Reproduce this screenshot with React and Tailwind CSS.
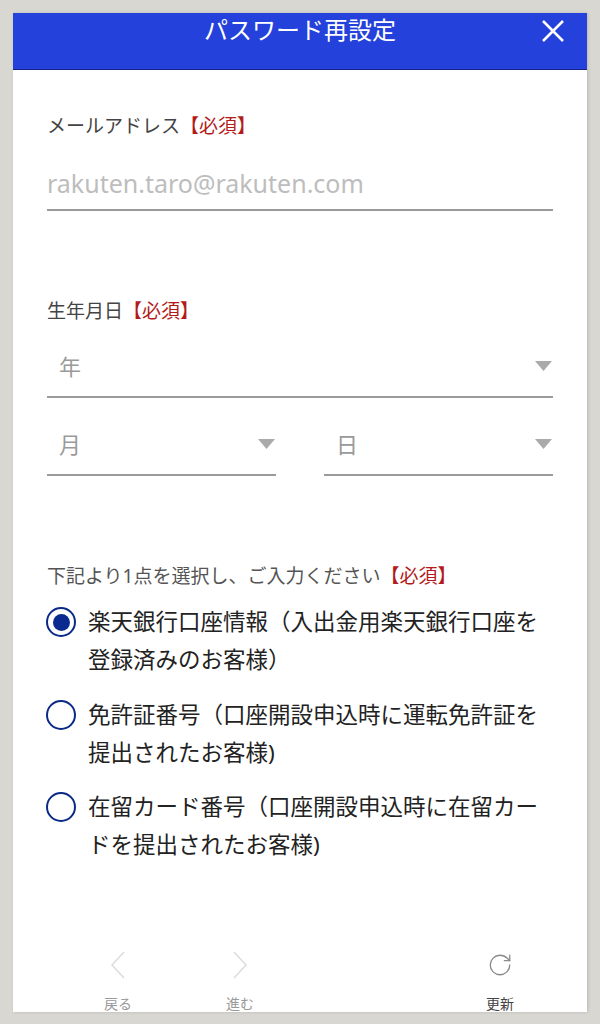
import { RotateCw } from 'lucide-react';

const jp = { fontFamily: '"Noto Sans", "Noto Sans CJK JP", sans-serif' };

function Required() {
  return <span className="text-[#b31b1b]">【必須】</span>;
}

function Caret() {
  return (
    <svg width="17" height="10" viewBox="0 0 17 10" className="shrink-0">
      <path d="M0 0 L17 0 L8.5 10 Z" fill="#aaaaaa" />
    </svg>
  );
}

function SelectBox({ label, className = '' }) {
  return (
    <div className={`h-[54px] pb-[8px] pl-[12px] pr-[1px] flex items-center justify-between border-b-2 border-[#9a9a9a] ${className}`}>
      <span className="text-[22px] text-[#9a9a9a]">{label}</span>
      <Caret />
    </div>
  );
}

function Radio({ checked, lines, className = '' }) {
  return (
    <div className={`flex items-start ${className}`}>
      <div className="w-[30px] h-[30px] mt-[4px] -ml-[1px] shrink-0 rounded-full border-2 border-[#0b2a86] flex items-center justify-center">
        {checked && <div className="w-[17px] h-[17px] rounded-full bg-[#0b2a8f]" />}
      </div>
      <div className="ml-[12px] text-[22.5px] leading-[38px] text-[#222]">
        {lines.map((l, i) => (
          <div key={i}>{l}</div>
        ))}
      </div>
    </div>
  );
}

function Chevron({ left }) {
  return (
    <svg width="16" height="28" viewBox="0 0 16 28">
      <path
        d={left ? 'M14 1 L2 14 L14 27' : 'M2 1 L14 14 L2 27'}
        fill="none"
        stroke="#dcdcdc"
        strokeWidth="1.5"
      />
    </svg>
  );
}

export default function App() {
  return (
    <div className="h-[1024px] bg-[#d8d7d2] px-[13px] pt-[13px] pb-[12px] flex flex-col" style={jp}>
      <div className="flex-1 bg-white flex flex-col shadow-[1px_0_3px_rgba(0,0,0,0.15)] overflow-hidden">
        {/* ヘッダー */}
        <div className="h-[57px] shrink-0 bg-[#2441dc] border-b border-[#14228a] relative flex justify-center">
          <h1 className="text-white text-[24px] leading-[34px]">パスワード再設定</h1>
          <svg
            width="24"
            height="24"
            viewBox="0 0 24 24"
            className="absolute right-[22px] top-[6px]"
          >
            <path d="M2 2 L22 22 M22 2 L2 22" stroke="white" strokeWidth="2.5" />
          </svg>
        </div>

        <div className="px-[34px]">
          {/* メール */}
          <div className="mt-[43px] text-[19px] leading-[26px] text-[#444]">
            メールアドレス<Required />
          </div>
          <div className="mt-[20px] h-[52px] flex items-center border-b-2 border-[#9a9a9a]">
            <span className="text-[25px] text-[#bdbdbd]">rakuten.taro@rakuten.com</span>
          </div>

          {/* 生年月日 */}
          <div className="mt-[87px] text-[19px] leading-[26px] text-[#444]">
            生年月日<Required />
          </div>
          <SelectBox label="年" className="mt-[20px]" />
          <div className="mt-[24px] flex gap-[48px]">
            <SelectBox label="月" className="flex-1" />
            <SelectBox label="日" className="flex-1" />
          </div>

          {/* 選択 */}
          <div className="mt-[87px] text-[19px] leading-[26px] text-[#555]">
            下記より1点を選択し、ご入力ください<Required />
          </div>
          <Radio
            checked
            className="mt-[14px]"
            lines={['楽天銀行口座情報（入出金用楽天銀行口座を', '登録済みのお客様）']}
          />
          <Radio
            className="mt-[17px]"
            lines={['免許証番号（口座開設申込時に運転免許証を', '提出されたお客様)']}
          />
          <Radio
            className="mt-[16px]"
            lines={['在留カード番号（口座開設申込時に在留カー', 'ドを提出されたお客様)']}
          />
        </div>

        {/* ナビ */}
        <div className="mt-auto h-[80px] shrink-0 flex pl-[65px]">
          <div className="w-[80px] flex flex-col items-center">
            <div className="h-[66px] flex items-center pt-[2px]">
              <Chevron left />
            </div>
            <span className="text-[14px] leading-[16px] text-[#999]">戻る</span>
          </div>
          <div className="w-[80px] ml-[42px] flex flex-col items-center">
            <div className="h-[66px] flex items-center pt-[2px]">
              <Chevron />
            </div>
            <span className="text-[14px] leading-[16px] text-[#999]">進む</span>
          </div>
          <div className="w-[80px] ml-[180px] flex flex-col items-center">
            <div className="h-[66px] flex items-center pt-[2px]">
              <RotateCw size={26} strokeWidth={1.2} color="#8a8a8a" />
            </div>
            <span className="text-[14px] leading-[16px] text-[#444]">更新</span>
          </div>
        </div>
      </div>
    </div>
  );
}
